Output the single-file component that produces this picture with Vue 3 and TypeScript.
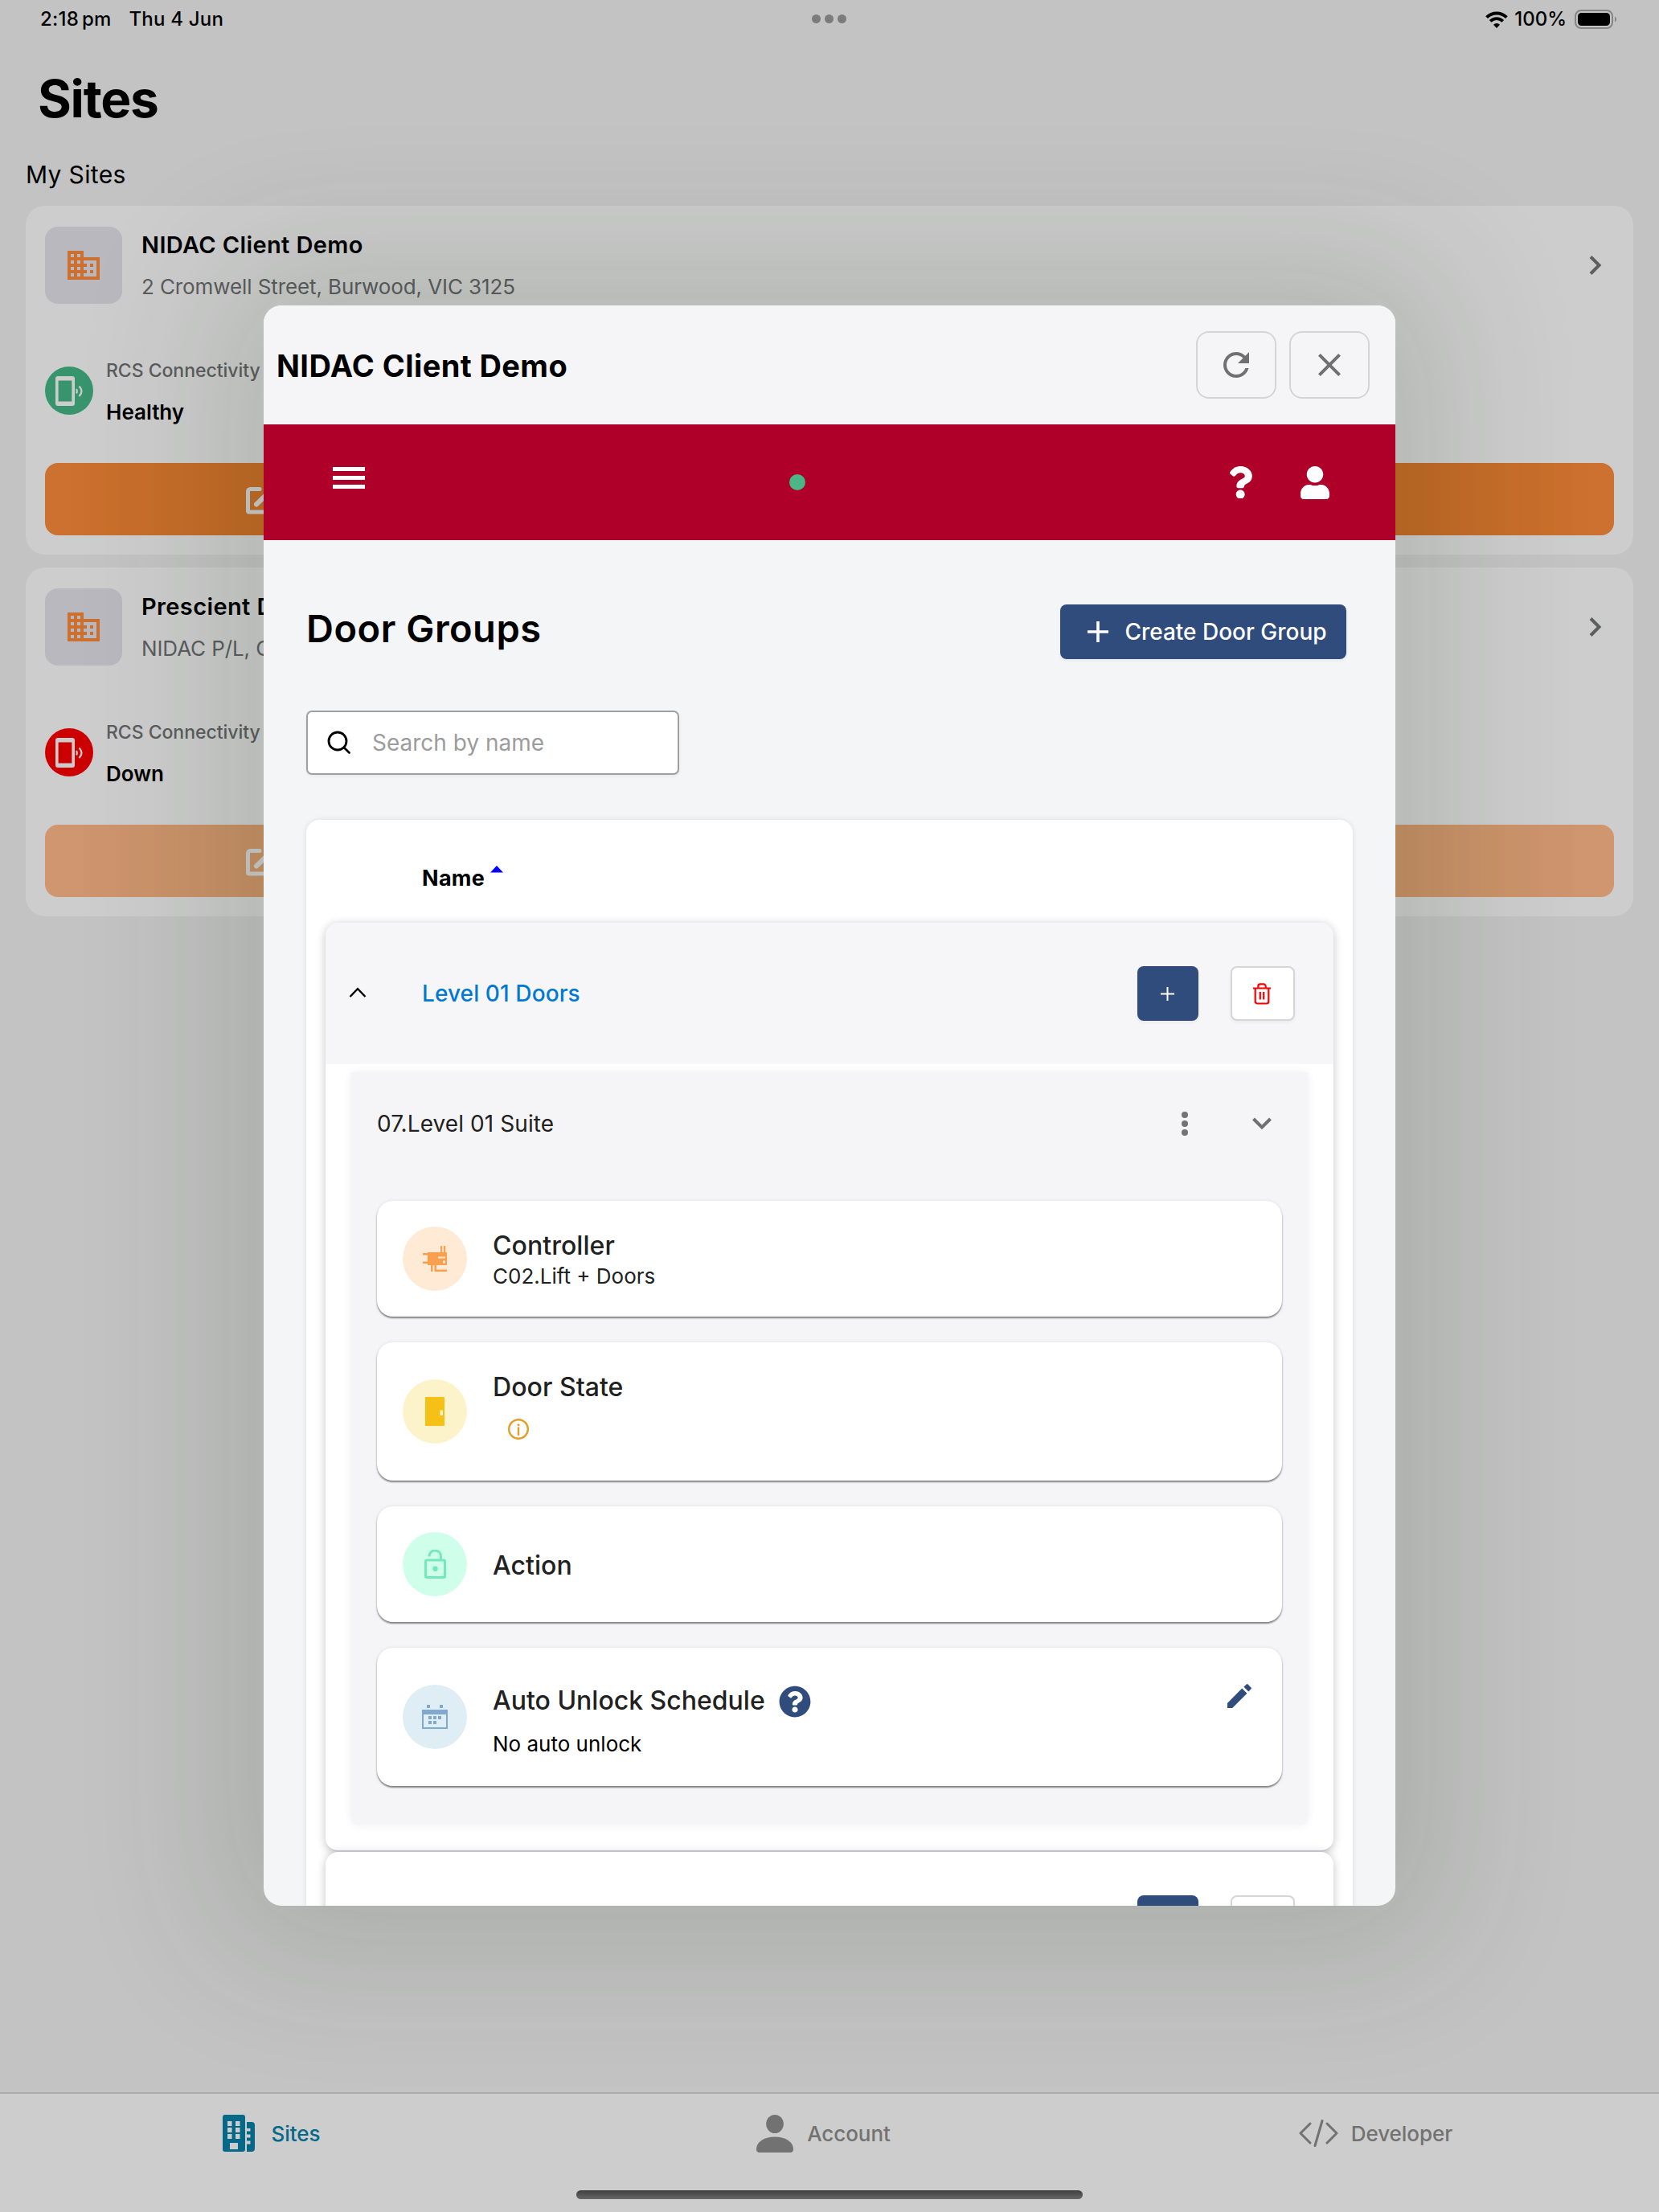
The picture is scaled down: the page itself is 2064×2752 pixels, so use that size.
<script setup lang="ts">
interface Site {
  name: string
  address: string
  status: string
  tone: string
}

interface Tab {
  label: string
  icon: string
}

const sites: Site[] = [
  { name: 'NIDAC Client Demo', address: '2 Cromwell Street, Burwood, VIC 3125', status: 'Healthy', tone: 'healthy' },
  { name: 'Prescient D', address: 'NIDAC P/L, C', status: 'Down', tone: 'down' },
]

const tabs: Tab[] = [
  { label: 'Sites', icon: 'building' },
  { label: 'Account', icon: 'person' },
  { label: 'Developer', icon: 'code' },
]
</script>

<template>
  <div class="screen">
    <header class="statusbar">
      <div class="clock"><span class="time">2:18<i></i>pm</span><span class="date">Thu 4 Jun</span></div>
      <div class="multitask"><i></i><i></i><i></i></div>
      <div class="indicators">
        <svg class="wifi" width="28" height="21" viewBox="0 0 28 21">
          <path d="M1.6 7.6a17.6 17.6 0 0 1 24.8 0" fill="none" stroke="#000" stroke-width="4" />
          <path d="M6.2 12.4a11 11 0 0 1 15.6 0" fill="none" stroke="#000" stroke-width="3.8" />
          <path d="M14 21l-4-4.2a5.6 5.6 0 0 1 8 0z" />
        </svg>
        <span class="percent">100%</span>
        <svg width="54" height="24" viewBox="0 0 54 24">
          <rect x="1" y="1" width="46" height="22" rx="7" fill="none" stroke="#868686" stroke-width="2" />
          <rect x="4" y="4" width="40" height="16" rx="4.5" />
          <path d="M50 8.5a4 4 0 0 1 0 7z" fill="#868686" />
        </svg>
      </div>
    </header>

    <h1 class="title">Sites</h1>
    <div class="subtitle">My Sites</div>

    <main class="sites">
      <section v-for="site in sites" :key="site.name" class="site" :class="site.tone">
        <div class="site-head">
          <div class="tile">
            <svg width="48" height="48" viewBox="0 0 24 24" fill="#cb702e"><path d="M12 7V3H2v18h20V7H12zM6 19H4v-2h2v2zm0-4H4v-2h2v2zm0-4H4V9h2v2zm0-4H4V5h2v2zm4 12H8v-2h2v2zm0-4H8v-2h2v2zm0-4H8V9h2v2zm0-4H8V5h2v2zm10 12h-8v-2h2v-2h-2v-2h2v-2h-2V9h8v10zm-2-8h-2v2h2v-2zm0 4h-2v2h2v-2z" /></svg>
          </div>
          <div class="site-text">
            <div class="site-name">{{ site.name }}</div>
            <div class="site-address">{{ site.address }}</div>
          </div>
          <svg class="go" width="18" height="26" viewBox="0 0 18 26"><path d="M3 2.5L13.5 13 3 23.5" fill="none" stroke="#5d5e60" stroke-width="4" /></svg>
        </div>
        <div class="rcs">
          <div class="badge">
            <svg width="35" height="37" viewBox="0 0 35 37">
              <path fill="#cccccc" fill-rule="evenodd" d="M3 0h18a3 3 0 0 1 3 3v31a3 3 0 0 1-3 3H3a3 3 0 0 1-3-3V3a3 3 0 0 1 3-3zM3.6 5.5v26h16.8v-26z" />
              <path d="M26 16q1.6 2.7 0 5.4M29.5 12.5q6 6.2 0 12.4" fill="none" stroke="#cccccc" stroke-width="2.2" />
            </svg>
          </div>
          <div>
            <div class="rcs-label">RCS Connectivity</div>
            <div class="rcs-value">{{ site.status }}</div>
          </div>
        </div>
        <div class="open">
          <svg width="40" height="36" viewBox="0 0 40 36" fill="none" stroke="#cccccc">
            <path d="M17 3.5H5.5a3 3 0 0 0-3 3v24a1.5 1.5 0 0 0 1.5 1.5H32" stroke-width="5" stroke-linecap="round" />
            <path d="M13 22.5L31 5" stroke-width="6" stroke-linecap="round" />
          </svg>
        </div>
      </section>
    </main>

    <nav class="tabbar">
      <div class="tabs">
        <div v-for="tab in tabs" :key="tab.label" class="tab" :class="tab.icon">
          <div class="tab-icon">
            <svg v-if="tab.icon === 'building'" width="40" height="46" viewBox="0 0 40 46" fill="#046888">
              <path fill-rule="evenodd" d="M3 0h22a3 3 0 0 1 3 3v40a3 3 0 0 1-3 3H3a3 3 0 0 1-3-3V3a3 3 0 0 1 3-3zM6 8v6h5.5V8zM16 8v6h5.5V8zM6 16v6h5.5v-6zM16 16v6h5.5v-6zM6 24v6h5.5v-6zM16 24v6h5.5v-6zM9 35v8h10v-8z" />
              <path d="M30 9h6a4 4 0 0 1 4 4v29a4 4 0 0 1-4 4h-6v-9.5h4.5v-4H30v-4h4.5v-4H30v-4h4.5v-3.5H30z" />
            </svg>
            <svg v-else-if="tab.icon === 'person'" width="46" height="47" viewBox="0 0 46 47" fill="#727272">
              <ellipse cx="23" cy="11.5" rx="10.8" ry="11.5" />
              <path d="M0 43C0 34 9 27.5 23 27.5S46 34 46 43q0 4-4 4H4q-4 0-4-4z" />
            </svg>
            <svg v-else width="49" height="34" viewBox="0 0 49 34" fill="none" stroke="#727272" stroke-width="3" stroke-linecap="round" stroke-linejoin="round">
              <path d="M14 5L2 17l12 12M35 5l12 12-12 12M29 1.5l-9 31" />
            </svg>
          </div>
          <span>{{ tab.label }}</span>
        </div>
      </div>
      <div class="home"></div>
    </nav>

    <div class="modal">
      <div class="modal-head">
        <h2>NIDAC Client Demo</h2>
        <button class="tool"><svg width="48" height="48" viewBox="0 0 24 24" fill="#707073"><path d="M17.65 6.35C16.2 4.9 14.21 4 12 4c-4.42 0-7.99 3.58-7.99 8s3.57 8 7.99 8c3.73 0 6.84-2.55 7.73-6h-2.08c-.82 2.33-3.04 4-5.65 4-3.31 0-6-2.69-6-6s2.69-6 6-6c1.66 0 3.14.69 4.22 1.78L13 11h7V4l-2.35 2.35z" /></svg></button>
        <button class="tool"><svg width="48" height="48" viewBox="0 0 24 24" fill="#707073"><path d="M19 6.41L17.59 5 12 10.59 6.41 5 5 6.41 10.59 12 5 17.59 6.41 19 12 13.41 17.59 19 19 17.59 13.41 12z" /></svg></button>
      </div>

      <div class="redbar">
        <div class="burger"><i></i><i></i><i></i></div>
        <div class="live"></div>
        <div class="redbar-tools">
          <svg width="30.4" height="40.5" viewBox="0 0 384 512" fill="#fff"><path d="M202.021 0C122.202 0 70.503 32.703 29.914 91.026c-7.363 10.58-5.093 25.086 5.178 32.874l43.138 32.709c10.373 7.865 25.132 6.026 33.253-4.148 25.049-31.381 43.63-49.449 82.757-49.449 30.764 0 68.816 19.799 68.816 49.631 0 22.552-18.617 34.134-48.993 51.164-35.423 19.86-82.299 44.576-82.299 106.405V320c0 13.255 10.745 24 24 24h72.471c13.255 0 24-10.745 24-24v-5.773c0-42.86 125.268-44.645 125.268-160.627C377.504 66.256 286.902 0 202.021 0zM192 373.459c-38.196 0-69.271 31.075-69.271 69.271 0 38.195 31.075 69.27 69.271 69.27s69.271-31.075 69.271-69.271-31.075-69.27-69.271-69.27z" /></svg>
          <svg width="36" height="41" viewBox="0 0 448 512" fill="#fff"><path d="M224 256c70.7 0 128-57.3 128-128S294.7 0 224 0 96 57.3 96 128s57.3 128 128 128zm89.6 32h-16.7c-22.2 10.2-46.9 16-72.9 16s-50.6-5.8-72.9-16h-16.7C60.2 288 0 348.2 0 422.4V464c0 26.5 21.5 48 48 48h352c26.5 0 48-21.5 48-48v-41.6c0-74.2-60.2-134.4-134.4-134.4z" /></svg>
        </div>
      </div>

      <div class="page">
        <div class="page-head">
          <h3>Door Groups</h3>
          <button class="create">
            <svg width="26" height="26" viewBox="0 0 26 26"><path d="M13 0v26M0 13h26" stroke="#fff" stroke-width="3.6" /></svg>
            <span>Create Door Group</span>
          </button>
        </div>

        <div class="search">
          <svg width="30" height="30" viewBox="0 0 30 30" fill="none" stroke="#000" stroke-width="2.8" stroke-linecap="round"><circle cx="13" cy="13" r="11" /><path d="M21 21l6.5 6.5" /></svg>
          <span>Search by name</span>
        </div>

        <div class="table">
          <div class="th"><span>Name</span><svg width="16" height="9" viewBox="0 0 16 9" fill="#00f"><path d="M8 0l8 8.5H0z" /></svg></div>

          <div class="group">
            <div class="group-row">
              <svg class="up" width="22" height="14" viewBox="0 0 22 14"><path d="M1.5 12L11 2.2 20.5 12" fill="none" stroke="#000" stroke-width="2.4" /></svg>
              <span class="group-name">Level 01 Doors</span>
              <button class="add"><svg width="17" height="17" viewBox="0 0 17 17"><path d="M8.5 0v17M0 8.5h17" stroke="#fff" stroke-width="2" /></svg></button>
              <button class="trash">
                <svg width="22" height="27" viewBox="0 0 22 27" fill="none" stroke="#f00" stroke-width="2.2">
                  <path d="M0 6.5h22M6.3 6.5V4a2.6 2.6 0 0 1 2.6-2.6h4.2A2.6 2.6 0 0 1 15.7 4v2.5M2.7 6.5V23a2.5 2.5 0 0 0 2.5 2.5h11.6a2.5 2.5 0 0 0 2.5-2.5V6.5M8.8 11v9.5M13.2 11v9.5" />
                </svg>
              </button>
            </div>

            <div class="panel">
              <div class="panel-head">
                <span>07.Level 01 Suite</span>
                <div class="kebab"><i></i><i></i><i></i></div>
                <svg width="26" height="18" viewBox="0 0 26 18"><path d="M2.5 3L13 13.5 23.5 3" fill="none" stroke="#707070" stroke-width="4" /></svg>
              </div>

              <div class="detail short">
                <div class="disc orange">
                  <svg width="32" height="32" viewBox="0 0 32 32" fill="#fa9f4d">
                    <path fill-rule="evenodd" d="M7 8h24v16H7zM20 13.5v2h9v-2zM26 18.5v3h3v-3z" />
                    <path d="M23 0h2.2v8H23zM27 0h2.2v8H27zM1 9h6v2.5H1zM1 19.5h6V22H1zM11 24h2.5v8H11zM15.5 24H18v5.5h13V32H15.5z" />
                  </svg>
                </div>
                <div class="lowered">
                  <div class="detail-title">Controller</div>
                  <div class="detail-sub">C02.Lift + Doors</div>
                </div>
              </div>

              <div class="detail tall">
                <div class="disc yellow">
                  <svg width="24" height="36" viewBox="0 0 24 36"><path fill="#f6c116" d="M0 0h24v36H0z" /><path fill="#fdf3cb" d="M18.5 16.5H22V23h-3.500z" /></svg>
                </div>
                <div>
                  <div class="detail-title">Door State</div>
                  <svg class="info" width="26" height="26" viewBox="0 0 26 26">
                    <circle cx="13" cy="13" r="11.8" fill="none" stroke="#e39f27" stroke-width="2.4" />
                    <path d="M13 11.5V20" stroke="#e39f27" stroke-width="2.4" stroke-linecap="round" /><circle cx="13" cy="7.8" r="1.5" fill="#e39f27" />
                  </svg>
                </div>
              </div>

              <div class="detail short">
                <div class="disc green">
                  <svg width="27" height="36" viewBox="0 0 27 36" fill="none" stroke="#73e9b7" stroke-width="3">
                    <rect x="1.5" y="13" width="24" height="21.5" rx="1.5" /><path d="M6 8.5a7 7 0 0 1 14.5-.5v5" /><circle cx="13.500" cy="23.7" r="3.2" fill="#73e9b7" stroke="none" />
                  </svg>
                </div>
                <div class="detail-title lowered">Action</div>
              </div>

              <div class="detail tall">
                <div class="disc blue">
                  <svg width="32" height="30" viewBox="0 0 32 30" fill="#83a8d0">
                    <path fill-rule="evenodd" d="M0 6h32v24H0zM2 12v16h28V12z" />
                    <path d="M6 0h4v4H6zM22 0h4v4h-4zM8 14h4v4H8zM14 14h4v4h-4zM20 14h4v4h-4zM8 20h4v4H8zM14 20h4v4h-4z" />
                  </svg>
                </div>
                <div class="schedule">
                  <div class="detail-title with-help">
                    <span>Auto Unlock Schedule</span>
                    <svg width="40" height="40" viewBox="0 0 512 512" fill="#304c7d"><path d="M504 256c0 136.997-111.043 248-248 248S8 392.997 8 256C8 119.083 119.043 8 256 8s248 111.083 248 248zM262.655 90c-54.497 0-89.255 22.957-116.549 63.758-3.536 5.286-2.353 12.415 2.715 16.258l34.699 26.31c5.205 3.947 12.621 3.008 16.665-2.122 17.864-22.658 30.113-35.797 57.303-35.797 20.429 0 45.698 13.148 45.698 32.958 0 14.976-12.363 22.667-32.534 33.976C247.128 238.528 216 254.941 216 296v4c0 6.627 5.373 12 12 12h56c6.627 0 12-5.373 12-12v-1.333c0-28.462 83.186-29.647 83.186-106.667 0-58.002-60.165-102-116.531-102zM256 338c-25.365 0-46 20.635-46 46 0 25.364 20.635 46 46 46s46-20.636 46-46c0-25.364-20.635-46-46-46z" /></svg>
                  </div>
                  <div class="detail-note">No auto unlock</div>
                </div>
                <svg class="pencil" width="30" height="30" viewBox="0 0 30 30" fill="#304c7d"><path d="M0 24v6h6.2L24.5 11.7l-6.3-6.1zM20.4 3.7L23.7.5q.9-.8 1.8 0l4 4q.8.9 0 1.8l-3.1 3.3z" /></svg>
              </div>
            </div>
          </div>

          <div class="group next">
            <button class="add"></button>
            <button class="trash"></button>
          </div>
        </div>
      </div>
    </div>
  </div>
</template>

<style>
body {
  margin: 0;
}
</style>

<style scoped>
.screen {
  position: relative;
  display: flex;
  flex-direction: column;
  width: 2064px;
  height: 2752px;
  overflow: hidden;
  background: #c3c3c3;
  color: #000;
  font-family: Inter, "Liberation Sans", sans-serif;
  white-space: nowrap;
}
.screen * {
  box-sizing: border-box;
}
svg {
  display: block;
  flex: none;
}
button {
  display: flex;
  align-items: center;
  justify-content: center;
  flex: none;
  padding: 0;
  border: 0;
  font: inherit;
}
h1, h2, h3 {
  margin: 0;
}
.statusbar {
  display: grid;
  grid-template-columns: 1fr auto 1fr;
  align-items: center;
  height: 48px;
  padding: 0 51px 0 50px;
  font-size: 24px;
  font-weight: 500;
  line-height: 48px;
}
.clock {
  display: flex;
  gap: 22px;
  letter-spacing: 0.2px;
}
.time i {
  display: inline-block;
  width: 4px;
}
.multitask {
  display: flex;
  gap: 5px;
  margin-bottom: 1px;
}
.multitask i {
  width: 11px;
  height: 11px;
  border-radius: 50%;
  background: #7c7c7c;
}
.indicators {
  display: flex;
  align-items: center;
  justify-content: flex-end;
}
.percent {
  margin: 0 10px 0 8px;
}
.title {
  margin: 35px 0 0 47px;
  font-size: 64px;
  font-weight: 700;
  line-height: 80px;
  letter-spacing: -1.3px;
}
.subtitle {
  margin: 34px 0 19px 32px;
  font-size: 30px;
  line-height: 40px;
  letter-spacing: 0.35px;
}
.sites {
  display: flex;
  flex-direction: column;
  gap: 16px;
  padding: 0 32px;
}
.site {
  display: flex;
  flex-direction: column;
  height: 434px;
  padding: 26px 24px 24px;
  border-radius: 24px;
  background: #cdcdcd;
}
.site-head {
  display: flex;
}
.tile {
  display: flex;
  align-items: center;
  justify-content: center;
  width: 96px;
  height: 96px;
  border-radius: 16px;
  background: #b8b8be;
}
.site-text {
  flex: 1;
  margin: 5px 0 0 24px;
}
.site-name {
  font-size: 29px;
  font-weight: 600;
  line-height: 36px;
  letter-spacing: 0.38px;
}
.site-address {
  margin-top: 16px;
  font-size: 26px;
  line-height: 36px;
  letter-spacing: -0.1px;
  color: #5b5c5e;
}
.go {
  margin: 35px 14.5px 0 0;
}
.rcs {
  display: flex;
  gap: 16px;
  margin-top: 67px;
}
.badge {
  display: flex;
  align-items: center;
  width: 60px;
  height: 60px;
  margin-top: 11px;
  padding-left: 13px;
  border-radius: 50%;
}
.healthy .badge {
  background: #38946c;
}
.down .badge {
  background: #cc0000;
}
.rcs-label {
  margin-top: 1px;
  font-size: 23px;
  font-weight: 500;
  line-height: 30px;
  letter-spacing: -0.03px;
  color: #5b5c5e;
}
.rcs-value {
  margin-top: 19px;
  font-size: 26px;
  font-weight: 600;
  line-height: 36px;
}
.open {
  display: flex;
  align-items: center;
  height: 90px;
  margin-top: auto;
  padding: 4px 0 0 250px;
  border-radius: 16px;
}
.healthy .open {
  background: linear-gradient(90deg, #cc7130 0, #c56a24 272px, #c56a24 1680px, #cc7130 100%);
}
.down .open {
  background: linear-gradient(90deg, #cf9670 0, #ca9165 272px, #ca9165 1680px, #cf9670 100%);
}
.tabbar {
  display: flex;
  flex-direction: column;
  align-items: center;
  height: 149px;
  margin-top: auto;
  border-top: 2px solid #acacac;
  background: #cdcdcd;
}
.tabs {
  display: flex;
  width: 100%;
  height: 98px;
}
.tab {
  display: flex;
  flex: 1;
  align-items: center;
  justify-content: center;
  gap: 16px;
  padding-right: 17px;
  font-size: 26px;
  font-weight: 500;
  letter-spacing: -0.05px;
  color: #727272;
}
.tab.building {
  color: #046888;
}
.tab-icon {
  display: flex;
  justify-content: center;
  width: 49px;
}
.home {
  width: 630px;
  height: 11px;
  margin-top: 22px;
  border-radius: 6px;
  background: linear-gradient(#3f3f3f, #676767);
}
.modal {
  position: absolute;
  top: 380px;
  left: 328px;
  display: flex;
  flex-direction: column;
  width: 1408px;
  height: 1991px;
  overflow: hidden;
  border-radius: 22px;
  background: #f4f5f7;
  box-shadow: 0 0 180px 60px rgba(20, 50, 20, 0.14);
}
.modal-head {
  display: flex;
  flex: none;
  align-items: center;
  gap: 16px;
  height: 148px;
  padding: 0 32px 0 16px;
  background: #f5f5f8;
}
.modal-head h2 {
  flex: 1;
  padding-top: 1px;
  font-size: 38px;
  font-weight: 700;
  line-height: 48px;
  letter-spacing: 0.4px;
}
.tool {
  width: 100px;
  height: 84px;
  border: 2px solid #d5d5d7;
  border-radius: 16px;
  background: none;
}
.redbar {
  display: grid;
  flex: none;
  grid-template-columns: 1fr 20px 1fr;
  align-items: center;
  height: 144px;
  padding: 0 82px 0 86px;
  background: #ae0028;
}
.burger {
  display: flex;
  flex-direction: column;
  gap: 6px;
  width: 40px;
  margin-bottom: 12px;
}
.burger i {
  height: 5px;
  background: #fff;
}
.live {
  width: 20px;
  height: 20px;
  margin-left: -42px;
  border-radius: 50%;
  background: #4bb686;
}
.redbar-tools {
  display: flex;
  justify-content: flex-end;
  gap: 59.5px;
}
.page {
  display: flex;
  flex-direction: column;
  padding: 80px 53px 0;
}
.page-head {
  display: flex;
  justify-content: space-between;
  padding-right: 8px;
}
.page-head h3 {
  font-size: 47px;
  font-weight: 600;
  line-height: 60px;
  letter-spacing: 0.5px;
}
.create {
  width: 356px;
  height: 68px;
  padding-left: 10px;
  gap: 20px;
  border-radius: 8px;
  background: #304c7d;
  color: #fff;
  font-size: 28px;
  font-weight: 500;
  box-shadow: 0 2px 4px rgba(0, 0, 0, 0.06);
}
.search {
  display: flex;
  align-items: center;
  gap: 26px;
  width: 464px;
  height: 80px;
  margin-top: 64px;
  padding-left: 24px;
  border: 2px solid #a0a0a0;
  border-radius: 7px;
  background: #fff;
  color: #9c9c9c;
  font-size: 28px;
  box-shadow: 0 2px 4px rgba(0, 0, 0, 0.05);
}
.table {
  height: 1500px;
  margin-top: 56px;
  padding: 0 24px;
  border-radius: 16px;
  background: #fff;
  box-shadow: 0 0 6px rgba(0, 0, 0, 0.1);
}
.th {
  display: flex;
  gap: 7px;
  height: 128px;
  padding: 55px 0 0 120px;
  font-size: 27px;
  font-weight: 700;
  line-height: 36px;
  letter-spacing: 0.3px;
}
.th svg {
  margin-top: 2px;
}
.group {
  height: 1156px;
  overflow: hidden;
  border-bottom: 2px solid #cdd3d7;
  border-radius: 16px;
  background: #fff;
  box-shadow: 0 2px 12px rgba(0, 0, 0, 0.24);
}
.group-row {
  display: flex;
  align-items: center;
  height: 176px;
  padding: 0 48px 0 29px;
  background: #f6f6f8;
}
.up {
  margin-bottom: 2px;
}
.group-name {
  flex: 1;
  margin-left: 69px;
  font-size: 28px;
  font-weight: 500;
  letter-spacing: 0.1px;
  color: #007ad1;
}
.add {
  width: 76px;
  height: 68px;
  margin-right: 40px;
  padding-right: 2px;
  border-radius: 8px;
  background: #304c7d;
  box-shadow: 0 2px 4px rgba(0, 0, 0, 0.06);
}
.trash {
  width: 80px;
  height: 68px;
  padding-right: 2px;
  border: 2px solid #d5d5d5;
  border-radius: 8px;
  background: #fff;
  box-shadow: 0 2px 4px rgba(0, 0, 0, 0.05);
}
.panel {
  display: flex;
  flex-direction: column;
  gap: 32px;
  height: 936px;
  margin: 10px 32px 0;
  padding: 0 32px;
  border-radius: 2px 2px 8px 8px;
  background: #f5f5f8;
  box-shadow: 0 0 12px rgba(0, 0, 0, 0.07);
}
.panel-head {
  display: flex;
  align-items: center;
  height: 128px;
  padding-right: 12px;
  font-size: 28px;
  letter-spacing: 0.08px;
  color: #212121;
}
.panel-head span {
  flex: 1;
  margin-bottom: 1px;
}
.kebab {
  display: flex;
  flex-direction: column;
  gap: 3px;
  margin-right: 79px;
}
.kebab i {
  width: 8px;
  height: 8px;
  border-radius: 50%;
  background: #737373;
}
.detail {
  display: flex;
  align-items: center;
  gap: 32px;
  padding: 0 38px 0 32px;
  border-radius: 20px;
  background: #fff;
  color: #212121;
  box-shadow: 0 2px 2px rgba(0, 0, 0, 0.45), 0 0 4px rgba(0, 0, 0, 0.09);
}
.detail.short {
  height: 144px;
}
.detail.tall {
  height: 172px;
}
.disc {
  display: flex;
  align-items: center;
  justify-content: center;
  flex: none;
  width: 80px;
  height: 80px;
  border-radius: 50%;
}
.orange { background: #ffead6; }
.yellow { background: #fdf3cb; }
.green { background: #cfffea; }
.blue { background: #dfedf5; }
.lowered {
  padding-top: 3px;
}
.detail-title {
  font-size: 32px;
  font-weight: 500;
  line-height: 40px;
  letter-spacing: 0.05px;
}
.detail-sub {
  font-size: 26px;
  line-height: 36px;
}
.info {
  margin: 19px 0 16px 19px;
}
.schedule {
  flex: 1;
  padding-top: 12px;
}
.with-help {
  display: flex;
  align-items: center;
  gap: 17px;
  letter-spacing: 0;
}
.with-help span {
  margin-bottom: 1px;
}
.detail-note {
  margin-top: 15px;
  font-size: 26px;
  line-height: 36px;
  color: #000;
}
.pencil {
  margin-bottom: 52px;
}
.next {
  display: flex;
  justify-content: flex-end;
  height: 200px;
  margin-top: 0;
  padding: 54px 48px 0 0;
}
</style>
